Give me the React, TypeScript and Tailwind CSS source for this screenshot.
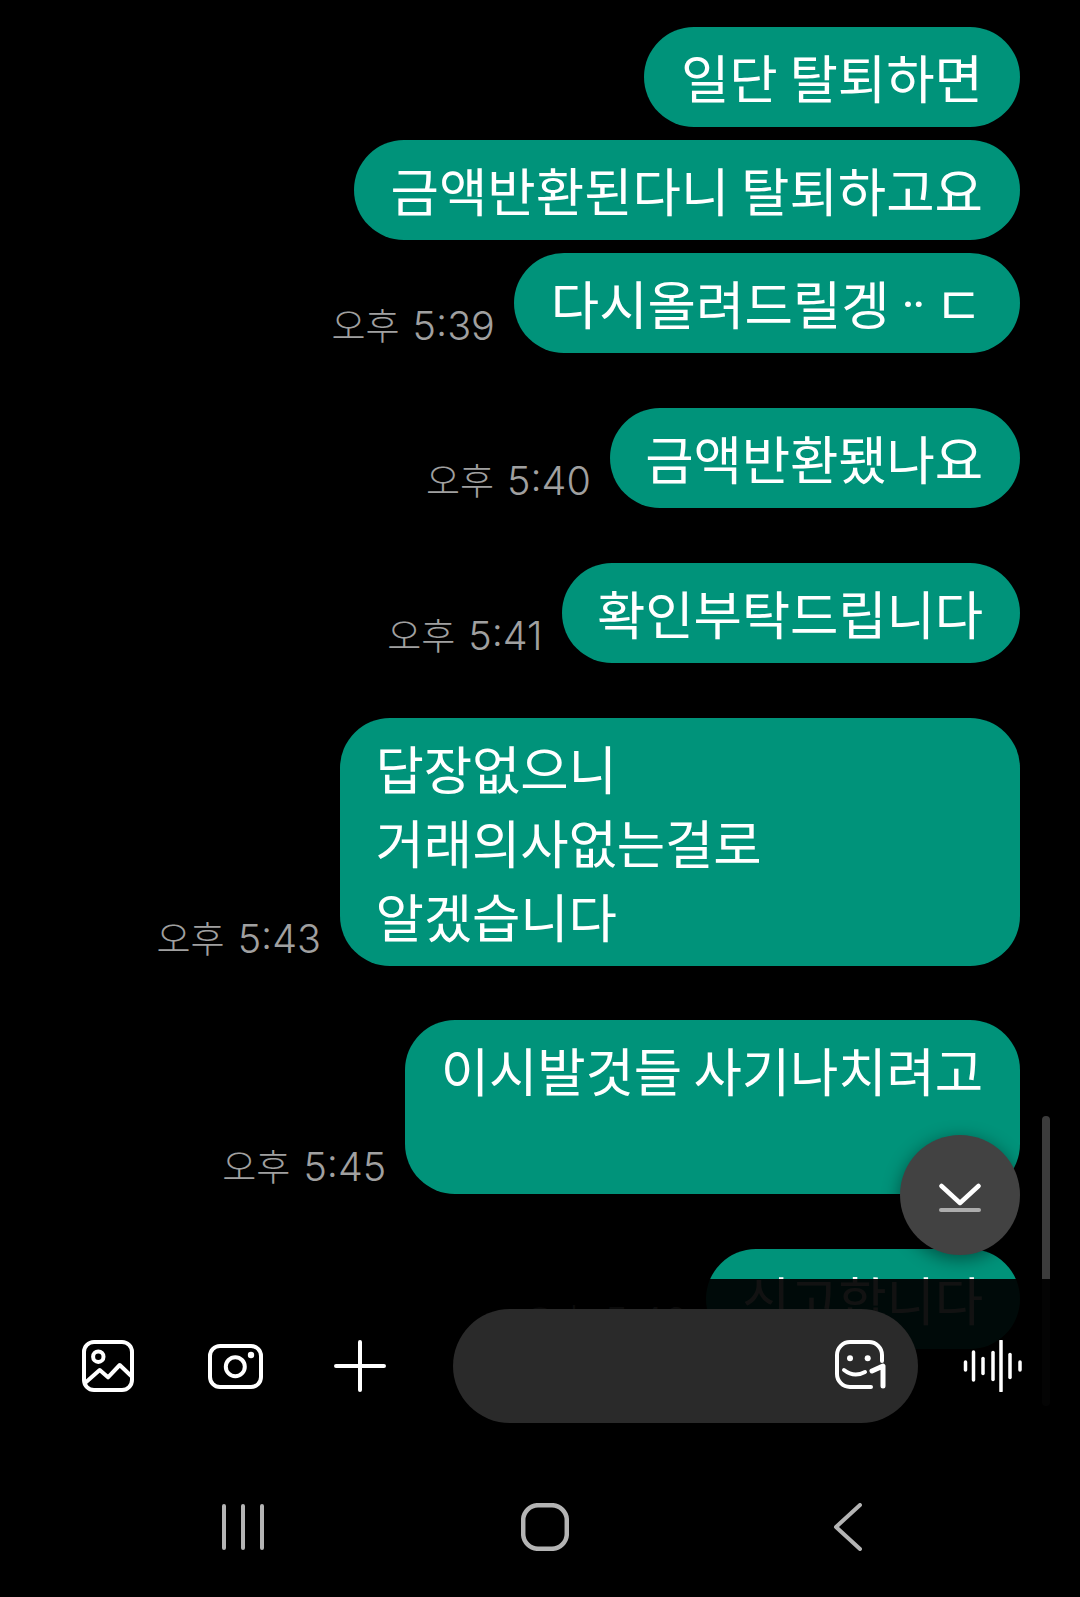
const FONT = "font-['Noto_Sans_CJK_KR',sans-serif]";

function Bubble({ lines, time, className = "", wide = false, tight = false }: { lines: React.ReactNode[]; time?: string; className?: string; wide?: boolean; tight?: boolean }) {
  return (
    <div className={`flex items-end justify-end gap-[19px] ${className}`}>
      {time && (
        <span className="mb-[2px] flex items-baseline gap-[13px] leading-[50px] font-light whitespace-pre text-[#a0a0a0]">
          <span className="text-[37px]">오후</span>
          <span className="font-['Inter',sans-serif] text-[39.5px]">{time}</span>
        </span>
      )}
      <div
        className={`rounded-[50px] bg-[#00937a] pt-[12px] pr-[37px] pb-[14.5px] text-[52.6px] leading-[74px] text-white ${
          tight ? "pl-[35.5px] tracking-[-0.15px]" : "pl-[37px]"
        } ${wide ? "w-[680px]" : ""}`}
      >
        {lines.map((l, i) => (
          <div key={i} className="h-[74px] whitespace-pre">
            {l}
          </div>
        ))}
      </div>
    </div>
  );
}

function ImageIcon() {
  return (
    <svg width="52" height="52" viewBox="0 0 52 52" fill="none" stroke="white" strokeWidth="4" strokeLinecap="round" strokeLinejoin="round">
      <rect x="2" y="2" width="48" height="48" rx="10" />
      <circle cx="16.3" cy="16.7" r="5.2" />
      <path d="M3 43 L17.7 30 L26 37.3 L37.7 25 L50 36.7" />
    </svg>
  );
}

function CameraIcon() {
  return (
    <svg width="55" height="45" viewBox="0 0 55 45" fill="none" stroke="white" strokeWidth="4">
      <rect x="2" y="2" width="51" height="41" rx="10" />
      <circle cx="27.3" cy="22.7" r="9.5" />
      <circle cx="43" cy="11" r="3.2" fill="white" stroke="none" />
    </svg>
  );
}

function PlusIcon() {
  return (
    <svg width="52" height="52" viewBox="0 0 52 52" fill="none" stroke="white" strokeWidth="4" strokeLinecap="round">
      <path d="M26 2 V50 M2 26 H50" />
    </svg>
  );
}

function StickerIcon() {
  return (
    <svg width="51" height="49" viewBox="0 0 51 49" fill="none" stroke="white" strokeWidth="4" strokeLinecap="round" strokeLinejoin="round">
      <path d="M47 21 V15 A13 13 0 0 0 34 2 H15 A13 13 0 0 0 2 15 V34 A13 13 0 0 0 15 47 H36" />
      <circle cx="15" cy="18.3" r="3" fill="white" stroke="none" />
      <circle cx="32.7" cy="18.3" r="3" fill="white" stroke="none" />
      <path d="M9 30 Q19 38 30 32" />
      <path d="M37 31 L48 26 V46" strokeWidth="5" />
    </svg>
  );
}

function WaveIcon() {
  const bars: [number, number][] = [
    [2.5, 8], [10.5, 28], [20, 15], [30, 27], [38, 50], [47, 23], [57, 8],
  ];
  return (
    <svg width="60" height="52" viewBox="0 0 60 52" fill="none" stroke="white" strokeWidth="3.5" strokeLinecap="round">
      {bars.map(([x, h], i) => (
        <line key={i} x1={x} x2={x} y1={26 - h / 2} y2={26 + h / 2} />
      ))}
    </svg>
  );
}

function DownIcon() {
  return (
    <svg width="42" height="30" viewBox="0 0 42 30" fill="none">
      <path d="M2.5 3 L21 20 L39.5 3" stroke="white" strokeWidth="4.5" strokeLinecap="round" strokeLinejoin="round" />
      <line x1="2" x2="40" y1="27" y2="27" stroke="#adadad" strokeWidth="4" strokeLinecap="round" />
    </svg>
  );
}

function RecentsIcon() {
  return (
    <svg width="42" height="46" viewBox="0 0 42 46" fill="none" stroke="#b4b4b4" strokeWidth="4" strokeLinecap="round">
      <path d="M2 2 V44 M21 2 V44 M40 2 V44" />
    </svg>
  );
}

function HomeIcon() {
  return (
    <svg width="48" height="48" viewBox="0 0 48 48" fill="none" stroke="#b4b4b4" strokeWidth="4.5">
      <path d="M17 2.2 H31 C39 2.2 45.8 9 45.8 17 V31 C45.8 39 39 45.8 31 45.8 H17 C9 45.8 2.2 39 2.2 31 V17 C2.2 9 9 2.2 17 2.2 Z" />
    </svg>
  );
}

function BackIcon() {
  return (
    <svg width="29" height="48" viewBox="0 0 29 48" fill="none" stroke="#b4b4b4" strokeWidth="4" strokeLinecap="round" strokeLinejoin="round">
      <path d="M27 2 L3 24 L27 46" />
    </svg>
  );
}

export default function App() {
  return (
    <div className={`relative h-[1597px] w-[1080px] overflow-hidden bg-black ${FONT}`}>
      <div className="flex flex-col pt-[26.5px] pr-[60px]">
        <Bubble lines={["일단 탈퇴하면"]} />
        <Bubble lines={["금액반환된다니 탈퇴하고요"]} className="mt-[12.5px]" />
        <Bubble
          lines={[<>다시올려드릴겡 <span className="relative -top-[2px] font-['Roboto',sans-serif] tracking-[-3px]">··</span> ㄷ</>]}
          time="5:39"
          className="mt-[12.5px]"
        />
        <Bubble lines={["금액반환됐나요"]} time="5:40" className="mt-[54.5px]" tight />
        <Bubble lines={["확인부탁드립니다"]} time="5:41" className="mt-[54.5px]" tight />
        <Bubble lines={["답장없으니", "거래의사없는걸로", "알겠습니다"]} time="5:43" className="mt-[54.5px]" wide tight />
        <Bubble lines={["이시발것들 사기나치려고", ""]} time="5:45" className="mt-[53.5px]" tight />
        <Bubble lines={["신고합니다"]} time="5:46" className="mt-[54.5px]" tight />
      </div>

      {/* scrollbar */}
      <div className="absolute top-[1116px] left-[1042px] h-[290px] w-[8px] rounded-full bg-[#3c3c3c]" />

      {/* floating scroll-down button */}
      <div className="absolute top-[1135px] left-[900px] flex h-[120px] w-[120px] items-center justify-center rounded-full bg-[#424242] pt-[6px] shadow-[0_4px_18px_rgba(0,0,0,0.45)]">
        <DownIcon />
      </div>

      {/* bottom bar */}
      <div className="absolute top-[1279px] left-0 h-[318px] w-[1080px] bg-black/93">
        <div className="flex items-center pt-[30px] pl-[82px]">
          <ImageIcon />
          <div className="ml-[74px]"><CameraIcon /></div>
          <div className="ml-[71px]"><PlusIcon /></div>
          <div className="ml-[67px] flex h-[114px] w-[465px] items-center justify-end rounded-full bg-[#2a2a2a] pr-[32px]">
            <div className="mb-[4px]"><StickerIcon /></div>
          </div>
          <div className="ml-[45px]"><WaveIcon /></div>
        </div>
        <div className="mt-[80px] flex items-center pl-[222px]">
          <RecentsIcon />
          <div className="ml-[257px]"><HomeIcon /></div>
          <div className="ml-[264px]"><BackIcon /></div>
        </div>
      </div>
    </div>
  );
}
